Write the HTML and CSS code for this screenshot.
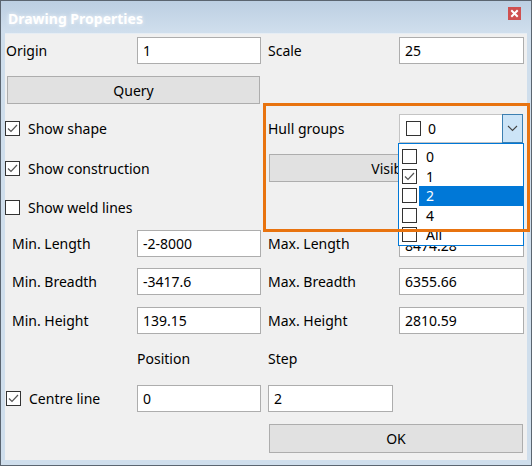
FILE: index.html
```html
<!DOCTYPE html>
<html>
<head>
<meta charset="utf-8">
<link rel="stylesheet" href="styles.css">
</head>
<body>
<div class="window">
  <div class="titlebar">
    <span class="title">Drawing Properties</span>
    <span class="close"><svg width="13" height="13" viewBox="0 0 13 13"><path d="M4 4 L9 9 M9 4 L4 9" stroke="#fff" stroke-width="2" stroke-linecap="square"/></svg></span>
  </div>
  <div class="content">
    <div class="row r1">
      <div class="cell-l"><span class="lbl lbl-tight">Origin</span><div class="input wl">1</div></div>
      <div class="cell-r"><span class="lbl2">Scale</span><div class="input wr">25</div></div>
    </div>
    <div class="row r2">
      <div class="cell-l"><div class="btn btn-query">Query</div></div>
    </div>
    <div class="row r3">
      <div class="cell-l"><span class="cb checked"><svg width="13" height="13" viewBox="0 0 13 13"><path d="M2 6.5 L5 9.5 L11 3" fill="none" stroke="#555" stroke-width="1.2"/></svg></span><span class="cb-text">Show shape</span></div>
      <div class="cell-r"><span class="lbl2">Hull groups</span>
        <div class="combo">
          <span class="cb cb-combo"></span><span class="combo-text">0</span>
          <span class="combo-btn"><svg width="11" height="7" viewBox="0 0 11 7"><path d="M1 1 L5.5 5.5 L10 1" fill="none" stroke="#444" stroke-width="1.1"/></svg></span>
          <div class="droplist">
            <div class="item"><span class="cb"></span><span class="item-text">0</span></div>
            <div class="item"><span class="cb checked"><svg width="13" height="13" viewBox="0 0 13 13"><path d="M2 6.5 L5 9.5 L11 3" fill="none" stroke="#555" stroke-width="1.2"/></svg></span><span class="item-text">1</span></div>
            <div class="item"><span class="cb"></span><span class="item-text selected">2</span></div>
            <div class="item"><span class="cb"></span><span class="item-text">4</span></div>
            <div class="item"><span class="cb"></span><span class="item-text">All</span></div>
          </div>
        </div>
      </div>
    </div>
    <div class="row r4">
      <div class="cell-l"><span class="cb checked"><svg width="13" height="13" viewBox="0 0 13 13"><path d="M2 6.5 L5 9.5 L11 3" fill="none" stroke="#555" stroke-width="1.2"/></svg></span><span class="cb-text">Show construction</span></div>
      <div class="cell-r"><div class="btn btn-visible">Visible</div></div>
    </div>
    <div class="row r5">
      <div class="cell-l"><span class="cb"></span><span class="cb-text">Show weld lines</span></div>
    </div>
    <div class="row r6">
      <div class="cell-l"><span class="lbl">Min. Length</span><div class="input wl">-2-8000</div></div>
      <div class="cell-r"><span class="lbl2">Max. Length</span><div class="input wr input-hidden">8474.28</div></div>
    </div>
    <div class="row r7">
      <div class="cell-l"><span class="lbl">Min. Breadth</span><div class="input wl">-3417.6</div></div>
      <div class="cell-r"><span class="lbl2">Max. Breadth</span><div class="input wr">6355.66</div></div>
    </div>
    <div class="row r8">
      <div class="cell-l"><span class="lbl">Min. Height</span><div class="input wl">139.15</div></div>
      <div class="cell-r"><span class="lbl2">Max. Height</span><div class="input wr">2810.59</div></div>
    </div>
    <div class="row r9">
      <div class="cell-l"><span class="lbl"></span><span class="head">Position</span></div>
      <div class="cell-r"><span class="head">Step</span></div>
    </div>
    <div class="row r10">
      <div class="cell-l"><span class="lbl lbl-cb"><span class="cb checked"><svg width="13" height="13" viewBox="0 0 13 13"><path d="M2 6.5 L5 9.5 L11 3" fill="none" stroke="#555" stroke-width="1.2"/></svg></span><span class="cb-text">Centre line</span></span><div class="input wl">0</div></div>
      <div class="cell-r"><div class="input wr">2</div></div>
    </div>
    <div class="row r11">
      <div class="cell-l"></div>
      <div class="cell-r"><div class="btn btn-ok">OK</div></div>
    </div>
  </div>
  <div class="annot"></div>
</div>
</body>
</html>
```

FILE: styles.css
```css
* { box-sizing: border-box; }
html, body { margin: 0; padding: 0; }
body {
  font-family: "Noto Sans", "Open Sans", sans-serif;
  font-size: 14px;
  color: #000;
  background: #fff;
}
.window {
  position: relative;
  width: 532px;
  height: 466px;
  border: 1px solid #5b6570;
  background: #cfdeec;
  overflow: hidden;
}
.titlebar {
  height: 32px;
  display: flex;
  justify-content: space-between;
  align-items: center;
  padding: 0 10px 0 7px;
  background: linear-gradient(#bccfe2, #d0dfed);
}
.title {
  color: #fff;
  font-weight: bold;
  font-size: 14px;
  text-shadow: 0 0 4px rgba(255,255,255,0.8);
  margin-top: 2px;
}
.close {
  align-self: flex-start;
  margin-top: 6px;
  width: 13px;
  height: 13px;
  background: #cf5050;
  border: 0;
  display: flex;
}
.content {
  margin: 0 4px;
  height: 427px;
  background: #f0f0f0;
  border-top: 1px solid #e6edf4;
}
.row {
  display: flex;
  align-items: center;
}
.r1 { margin-top: 3px; height: 27px; }
.r2 { margin-top: 12px; height: 28px; }
.r3 { margin-top: 10px; height: 29px; }
.r4 { margin-top: 11px; height: 28px; }
.r5 { margin-top: 11px; height: 28px; }
.r6 { margin-top: 9px; height: 27px; }
.r7 { margin-top: 11px; height: 27px; }
.r8 { margin-top: 12px; height: 27px; }
.r9 { margin-top: 16px; height: 18px; }
.r10 { margin-top: 17px; height: 27px; }
.r11 { margin-top: 12px; height: 29px; }
.cell-l {
  width: 263px;
  height: 100%;
  display: flex;
  align-items: center;
}
.cell-r {
  width: 259px;
  height: 100%;
  display: flex;
  align-items: center;
}
.lbl {
  width: 132px;
  padding-left: 7px;
  flex: none;
}
.lbl-tight { padding-left: 1px; }
.lbl-cb {
  display: flex;
  align-items: center;
  padding-left: 1px;
}
.lbl2 {
  width: 131px;
  flex: none;
}
.head { line-height: 18px; }
.input {
  height: 27px;
  background: #fff;
  border: 1px solid #adadad;
  padding-left: 5px;
  display: flex;
  align-items: center;
  flex: none;
}
.input-hidden { align-items: flex-end; padding-bottom: 1px; }
.wl { width: 124px; }
.wr { width: 125px; }
.btn {
  height: 28px;
  background: #e1e1e1;
  border: 1px solid #adadad;
  display: flex;
  align-items: center;
  justify-content: center;
  flex: none;
}
.btn-query { margin-left: 2px; width: 253px; }
.btn-visible { margin-left: 1px; width: 255px; padding-right: 8px; }
.btn-ok { margin-left: 1px; width: 254px; height: 29px; }
.cb {
  width: 15px;
  height: 15px;
  border: 1px solid #333;
  background: #fff;
  flex: none;
  display: flex;
  align-items: center;
  justify-content: center;
}
.cb-text { margin-left: 8px; }
.combo {
  position: relative;
  width: 124px;
  height: 29px;
  background: #fff;
  border: 1px solid #c4c4c4;
  display: flex;
  align-items: center;
  flex: none;
}
.cb-combo { margin-left: 6px; }
.combo-text { margin-left: 7px; flex: 1; }
.combo-btn {
  width: 21px;
  height: 29px;
  margin: -1px -1px -1px 0;
  background: #cce4f7;
  border: 1px solid #3c7fb1;
  display: flex;
  align-items: center;
  justify-content: center;
}
.droplist {
  position: absolute;
  left: -2px;
  top: 28px;
  width: 126px;
  height: 103px;
  background: #fff;
  border: 1px solid #0078d7;
  padding-top: 3px;
  z-index: 2;
}
.item {
  height: 19.5px;
  display: flex;
  align-items: center;
  padding-left: 3px;
}
.item-text {
  margin-left: 2px;
  height: 19.5px;
  flex: 1;
  padding-left: 7px;
  display: flex;
  align-items: center;
}
.item-text.selected {
  background: #0078d7;
  color: #fff;
}
.annot {
  position: absolute;
  left: 262px;
  top: 102px;
  width: 267px;
  height: 129px;
  border: 3px solid #e8730f;
  z-index: 5;
  pointer-events: none;
}
```
